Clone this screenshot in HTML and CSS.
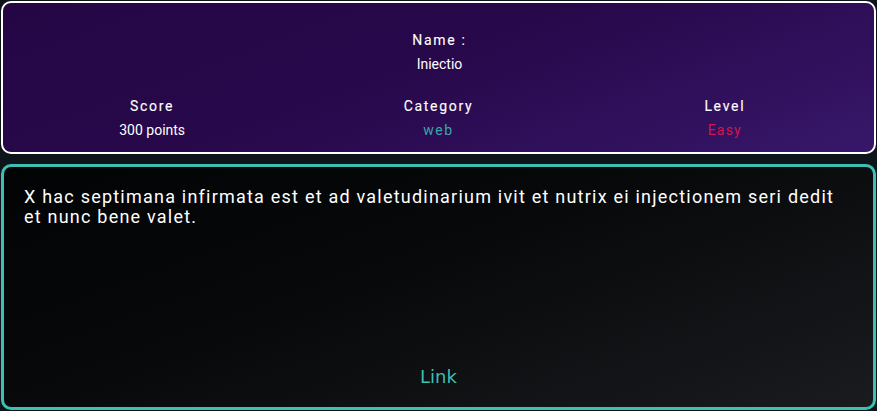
FILE: index.html
```html
<!DOCTYPE html>
<html>
<head>
<meta charset="utf-8">
<link rel="stylesheet" href="styles.css">
</head>
<body>
<main class="page">
  <section class="info-card">
    <div class="name-block">
      <div class="label">Name :</div>
      <div class="value">Iniectio</div>
    </div>
    <div class="stats">
      <div class="stat">
        <div class="label">Score</div>
        <div class="value">300 points</div>
      </div>
      <div class="stat">
        <div class="label">Category</div>
        <div class="value category">web</div>
      </div>
      <div class="stat">
        <div class="label">Level</div>
        <div class="value level">Easy</div>
      </div>
    </div>
  </section>
  <section class="desc-card">
    <p class="desc">X hac septimana infirmata est et ad valetudinarium ivit et nutrix ei injectionem seri dedit et nunc bene valet.</p>
    <a class="link" href="#">Link</a>
  </section>
</main>
</body>
</html>
```
FILE: styles.css
```css
html, body {
  margin: 0;
  padding: 0;
  background: #0d141a;
  font-family: Roboto, "Liberation Sans", sans-serif;
  color: #ffffff;
}
.page {
  width: 877px;
  height: 411px;
  box-sizing: border-box;
  padding: 1px;
  display: flex;
  flex-direction: column;
  gap: 10px;
}
.info-card {
  height: 153px;
  flex: none;
  box-sizing: border-box;
  border: 2px solid #ffffff;
  border-radius: 10px;
  background: linear-gradient(160deg, #250645 0%, #27084a 45%, #37176a 100%);
  display: flex;
  flex-direction: column;
  align-items: center;
  padding: 27px 6px 0;
}
.label {
  font-size: 14px;
  font-weight: 400;
  letter-spacing: 1.7px;
  line-height: 20px;
  color: #ffffff;
  -webkit-text-stroke: 0.12px #ffffff;
}
.value {
  font-size: 14px;
  line-height: 18px;
  margin-top: 5px;
  color: #ffffff;
}
.name-block {
  text-align: center;
  margin-left: 2px;
}
.stats {
  margin-top: 23px;
  width: 100%;
  display: grid;
  grid-template-columns: 1fr 1fr 1fr;
  text-align: center;
}
.value.category {
  color: #3aa7a7;
  letter-spacing: 1.5px;
}
.value.level {
  color: #d6154a;
  letter-spacing: 1.2px;
}
.desc-card {
  flex: 1;
  box-sizing: border-box;
  border: 3px solid #3dbfb2;
  border-radius: 10px;
  background: linear-gradient(160deg, #020304 0%, #07090b 45%, #1a1b1e 100%);
  display: flex;
  flex-direction: column;
  align-items: center;
  padding: 20px 30px 20px 20px;
}
.desc {
  margin: 0;
  align-self: stretch;
  font-size: 18px;
  line-height: 20px;
  letter-spacing: 1.22px;
  color: #ffffff;
}
.link {
  margin-top: auto;
  margin-left: 10px;
  font-family: "DejaVu Sans", sans-serif;
  font-size: 18px;
  color: #3dbfb2;
  text-decoration: none;
}
```
